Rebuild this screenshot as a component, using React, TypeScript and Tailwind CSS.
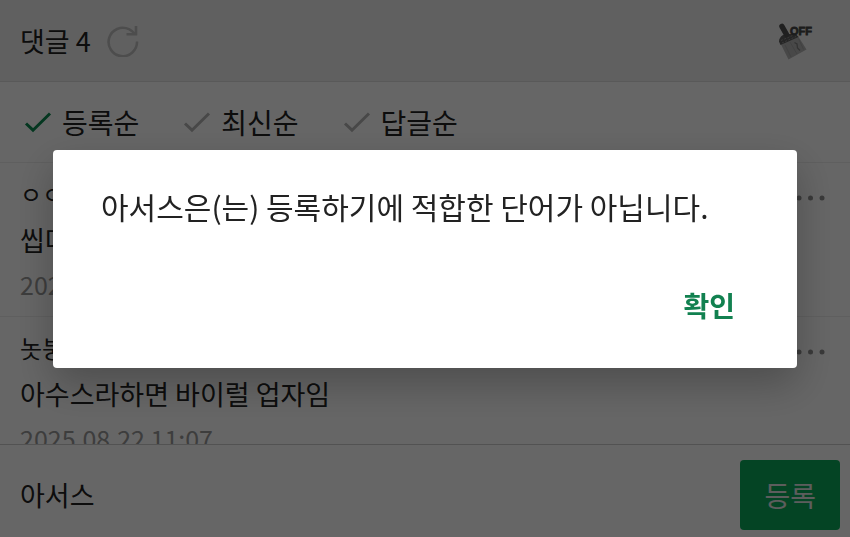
import React, { useState } from 'react';

interface Comment {
  id: number;
  name: string;
  text: string;
  date: string;
}

const comments: Comment[] = [
  { id: 1, name: 'ㅇㅇ', text: '씹다', date: '2025.08.22 11:05' },
  { id: 2, name: '놋붕', text: '아수스라하면 바이럴 업자임', date: '2025.08.22 11:07' },
];

const sortOptions = ['등록순', '최신순', '답글순'];

const RefreshIcon: React.FC = () => (
  <svg width="32" height="32" viewBox="0 0 32 32" fill="none" stroke="#c0c0c0" strokeWidth="2.6">
    <path d="M30 16.500A14.200 14.200 0 1 1 22 4.200Q25.500 6 28 9" />
    <path d="M29 1v8.200h-9.500" />
  </svg>
);

const CheckIcon: React.FC<{ active: boolean }> = ({ active }) => (
  <svg
    width="28"
    height="22"
    viewBox="0 0 28 22"
    fill="none"
    strokeWidth="3"
    className={active ? 'stroke-[#0c8a50]' : 'stroke-[#b4b4b4]'}
  >
    <path d="M2 12.500l7 6.700L26 2.500" />
  </svg>
);

const BrushIcon: React.FC = () => (
  <svg width="36" height="38" viewBox="0 0 36 38">
    <path d="M3 22.500L20 14l8.500 13.500L10.500 37.500z" fill="#b4b4b4" />
    <path d="M7 23l6 12M12 20l7 12M20.500 16.500l5 11" stroke="#a4a4a4" strokeWidth="1" />
    <path d="M16.500 20.500l2.500 1.500 .5 4 2.500 2.500" stroke="#808080" strokeWidth="1.300" fill="none" />
    <path d="M1 19.500q0-4 4-6.500l4-1 9 0 2.500 3L2.500 23z" fill="#5c5c5c" />
    <path d="M3 18.500l14-6M4 21l14-6.500" stroke="#8c8c8c" strokeWidth="1" strokeDasharray="2 1.500" />
    <path d="M4 4.500L8.500 12.500" stroke="#505050" strokeWidth="5.500" strokeLinecap="round" />
    <text
      x="12"
      y="13"
      fontFamily="Liberation Sans, sans-serif"
      fontSize="11"
      fontWeight="700"
      fill="#484848"
      stroke="#484848"
      strokeWidth=".8"
    >
      OFF
    </text>
  </svg>
);

const MoreIcon: React.FC = () => (
  <svg width="30" height="6" viewBox="0 0 30 6" fill="#909090">
    <circle cx="3" cy="3" r="2.500" />
    <circle cx="14.500" cy="3" r="2.500" />
    <circle cx="26" cy="3" r="2.500" />
  </svg>
);

const CommentItem: React.FC<{ comment: Comment }> = ({ comment }) => (
  <li className="flex justify-between border-b border-[#eeeeee] pt-2 pb-2.5 pl-5 pr-6">
    <div className="leading-[46px]">
      <p className="text-2xl leading-[46px]">{comment.name}</p>
      <p className="text-[27px]">{comment.text}</p>
      <time className="block text-[25px] leading-[43px] text-[#999999]">{comment.date}</time>
    </div>
    <button type="button" aria-label="더보기" className="self-start pt-6">
      <MoreIcon />
    </button>
  </li>
);

export default function App() {
  const [sort, setSort] = useState('등록순');
  const [value, setValue] = useState('아서스');
  const [open, setOpen] = useState(true);

  return (
    <div className="flex h-screen flex-col bg-white font-['Noto_Sans_CJK_KR',sans-serif] text-[#222222]">
      {/* Header */}
      <header className="flex shrink-0 items-center justify-between border-b border-[#dfdfdf] bg-[#f1f1f1] pt-[21px] pb-5 pl-5 pr-9">
        <div className="flex items-center gap-4">
          <h1 className="text-[27px] leading-10">댓글 4</h1>
          <button type="button" aria-label="새로고침">
            <RefreshIcon />
          </button>
        </div>
        <button type="button" aria-label="청소 끄기">
          <BrushIcon />
        </button>
      </header>

      {/* Sort options */}
      <nav className="flex shrink-0 items-center gap-11 border-b border-[#eeeeee] px-6 py-5">
        {sortOptions.map((option) => (
          <button
            key={option}
            type="button"
            onClick={() => setSort(option)}
            className="flex items-center gap-2.5 text-[28px] leading-10"
          >
            <CheckIcon active={sort === option} />
            {option}
          </button>
        ))}
      </nav>

      <ul className="min-h-0 flex-1 overflow-hidden">
        {comments.map((comment) => (
          <CommentItem key={comment.id} comment={comment} />
        ))}
      </ul>

      {/* Comment form */}
      <form
        onSubmit={(e) => e.preventDefault()}
        className="flex shrink-0 items-center border-t border-[#cccccc] pt-[15px] pr-2.5 pb-[7px] pl-5"
      >
        <input
          type="text"
          aria-label="댓글 입력"
          value={value}
          onChange={(e) => setValue(e.target.value)}
          className="min-w-0 flex-1 bg-transparent text-[27px] leading-10 outline-none"
        />
        <button type="submit" className="rounded bg-[#0baa5a] px-6 py-[15px] text-[28px] leading-10 text-[#e8e8e8]">
          등록
        </button>
      </form>

      {/* Alert */}
      {open && (
        <div className="fixed inset-0 flex items-center justify-center bg-black/60 px-[53px] pb-5">
          <div
            role="alertdialog"
            aria-labelledby="alert-message"
            className="w-full rounded bg-white px-12 pt-9 pb-10 shadow-[0_16px_40px_rgba(0,0,0,0.25)]"
          >
            <p id="alert-message" className="text-[30px] leading-10 text-[#222222]">
              아서스은(는) 등록하기에 적합한 단어가 아닙니다.
            </p>
            <div className="mt-14 flex justify-end pr-3.5">
              <button
                type="button"
                onClick={() => setOpen(false)}
                className="text-[28px] leading-[46px] font-bold text-[#128150]"
              >
                확인
              </button>
            </div>
          </div>
        </div>
      )}
    </div>
  );
}
